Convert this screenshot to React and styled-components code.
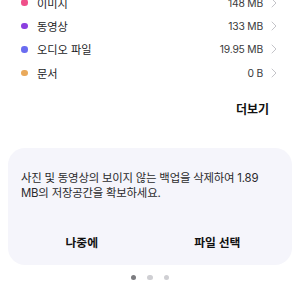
import React from "react";
import styled, { createGlobalStyle } from "styled-components";

const GlobalStyle = createGlobalStyle`
  html, body {
    margin: 0;
    padding: 0;
    background: #ffffff;
    overflow: hidden;
  }
  body {
    font-family: "Inter", "Noto Sans CJK KR", "Noto Sans", sans-serif;
    color: #1d1d1f;
  }
`;

const items = [
  { label: "이미지", value: "148 MB", color: "#ef4f8a" },
  { label: "동영상", value: "133 MB", color: "#8b3fe0" },
  { label: "오디오 파일", value: "19.95 MB", color: "#6a6cf0" },
  { label: "문서", value: "0 B", color: "#e9a95b" },
];

const Chevron = () => (
  <svg width="6" height="10" viewBox="0 0 6 10" fill="none">
    <path d="M1 1l4 4-4 4" stroke="#c4c4c9" strokeWidth="1" strokeLinecap="round" strokeLinejoin="round" />
  </svg>
);

const App = () => {
  return (
    <Page>
      <GlobalStyle />
      <List>
        {items.map((item) => (
          <Row key={item.label}>
            <Dot $color={item.color} />
            <Label>{item.label}</Label>
            <Value>{item.value}</Value>
            <Chevron />
          </Row>
        ))}
      </List>
      <MoreRow>
        <MoreButton>더보기</MoreButton>
      </MoreRow>

      <Card>
        <Message>
          사진 및 동영상의 보이지 않는 백업을 삭제하여 1.89 MB의 저장공간을 확보하세요.
        </Message>
        <Actions>
          <ActionButton>나중에</ActionButton>
          <ActionButton>파일 선택</ActionButton>
        </Actions>
      </Card>

      <Pager>
        <PageDot $active />
        <PageDot />
        <PageDot />
      </Pager>
    </Page>
  );
};

const Page = styled.div`
  width: 300px;
  height: 300px;
  display: flex;
  flex-direction: column;
`;

const List = styled.div`
  display: flex;
  flex-direction: column;
  margin-top: -9px;
`;

const Row = styled.div`
  display: flex;
  align-items: center;
  height: 23.4px;
  padding: 0 23px 0 21px;
`;

const Dot = styled.span`
  width: 6.5px;
  height: 6.5px;
  border-radius: 50%;
  background: ${(p) => p.$color};
  flex-shrink: 0;
`;

const Label = styled.span`
  margin-left: 9.5px;
  font-size: 11.2px;
  color: #1d1d1f;
  flex: 1;
`;

const Value = styled.span`
  font-size: 10.3px;
  color: #3a3a3c;
  margin-right: 8px;
  letter-spacing: -0.2px;
`;

const MoreRow = styled.div`
  display: flex;
  justify-content: flex-end;
  padding: 15px 31px 0 0;
`;

const MoreButton = styled.span`
  font-size: 12px;
  font-weight: 700;
  color: #111;
`;

const Card = styled.div`
  margin: 31px 8px 0;
  height: 117px;
  background: #f5f5fb;
  border-radius: 17px;
  display: flex;
  flex-direction: column;
  padding: 23px 26px 0 13px;
  box-sizing: border-box;
`;

const Message = styled.p`
  margin: 0;
  font-size: 11.4px;
  line-height: 15px;
  letter-spacing: -0.2px;
  color: #2a2a2c;
`;

const Actions = styled.div`
  display: grid;
  grid-template-columns: 1fr 1fr;
  margin: 32px -19px 0 -7px;
`;

const ActionButton = styled.span`
  text-align: center;
  font-size: 11.8px;
  font-weight: 700;
  color: #111;
`;

const Pager = styled.div`
  display: flex;
  justify-content: center;
  gap: 11px;
  margin-top: 10px;
`;

const PageDot = styled.span`
  width: 5.5px;
  height: 5.5px;
  border-radius: 50%;
  background: ${(p) => (p.$active ? "#7c7c80" : "#cfcfd3")};
`;

export default App;
